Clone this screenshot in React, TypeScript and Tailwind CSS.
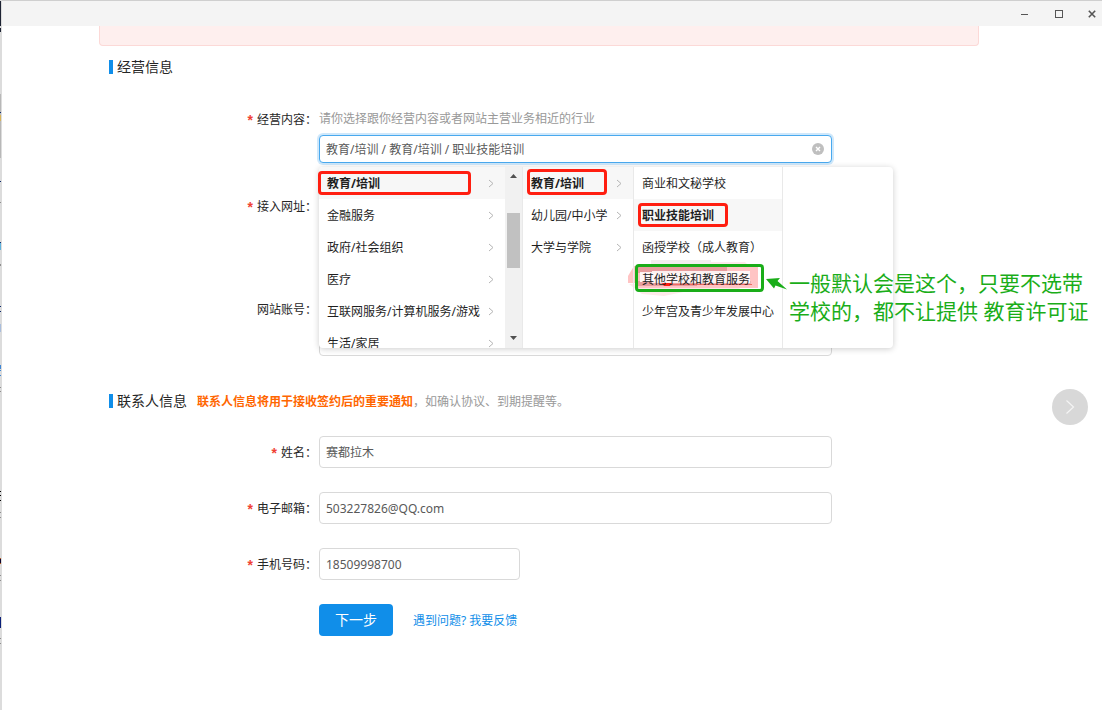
import { useState } from "react";
import clsx from "clsx";

type Option = { label: string; active?: boolean; leaf?: boolean };

const INDUSTRIES: Option[] = [
  { label: "教育/培训", active: true },
  { label: "金融服务" },
  { label: "政府/社会组织" },
  { label: "医疗" },
  { label: "互联网服务/计算机服务/游戏" },
  { label: "生活/家居" },
];

const SUB_INDUSTRIES: Option[] = [
  { label: "教育/培训", active: true },
  { label: "幼儿园/中小学" },
  { label: "大学与学院" },
];

const SCHOOLS: Option[] = [
  { label: "商业和文秘学校", leaf: true },
  { label: "职业技能培训", active: true, leaf: true },
  { label: "函授学校（成人教育）", leaf: true },
  { label: "其他学校和教育服务", leaf: true },
  { label: "少年宫及青少年发展中心", leaf: true },
];

const INPUT =
  "block w-full rounded border border-[#d9d9d9] bg-white px-1.5 text-xs text-[#595959] outline-none";

export default function App() {
  return (
    <div className="relative flex min-h-screen overflow-hidden bg-white font-['Noto_Sans','Noto_Sans_CJK_SC',sans-serif] text-xs text-[#262626]">
      <WindowEdge />
      <div className="min-w-0 flex-1">
        <TitleBar />
        <main className="pr-[26px]">
          <div className="mx-auto w-full max-w-[880px]">
            <div className="h-5 rounded-b border border-t-0 border-[#fcd9d7] bg-[#feefee]" />
            <form className="pl-2.5" onSubmit={(e) => e.preventDefault()}>
              <BusinessSection />
              <ContactSection />
              <div className="mt-6 flex items-center pl-[210px]">
                <button type="submit" className="h-8 w-[74px] rounded bg-[#108ee9] text-sm text-white">
                  下一步
                </button>
                <a href="#feedback" className="ml-5 pt-0.5 text-[#108ee9]">
                  遇到问题? 我要反馈
                </a>
              </div>
            </form>
          </div>
        </main>
      </div>
      <button
        type="button"
        aria-label="next"
        className="absolute top-[389px] right-3.5 flex size-9 items-center justify-center rounded-full bg-[#d8d8d8]"
      >
        <svg viewBox="0 0 10 16" className="h-4 w-2.5" fill="none" stroke="#f4f4f4" strokeWidth="1.2">
          <path d="M1.5 1.5 8.5 8l-7 6.5" />
        </svg>
      </button>
    </div>
  );
}

// sliver of the window behind, visible along the left side
function WindowEdge() {
  return (
    <svg className="w-0.5 shrink-0 self-stretch" viewBox="0 0 2 710" preserveAspectRatio="none" shapeRendering="crispEdges">
      <path fill="#dcdcdc" d="M0 0h2v710H0z" />
      <path fill="#1d2333" d="M0 1h1v25H0zM0 28h1v4H0z" />
      <path fill="#b8b8b8" d="M0 94h1v64H0z" />
      <path fill="#d8b45a" d="M0 115h1v6H0z" />
      <path fill="#0c2a6b" d="M0 112h1v1H0zM0 181h1v1H0zM0 242h1v1H0zM0 306h1v1H0zM0 311h1v1H0z" />
      <path fill="#62b3dd" d="M0 243h1v7H0z" />
      <path fill="#a9bddc" d="M0 324h1v8H0z" />
      <path fill="#3d86d6" d="M0 365h1v4H0zM0 370h1v1H0zM0 375h1v1H0z" />
      <path fill="#8f8f8f" d="M0 202h1v1H0zM0 264h1v2H0zM0 387h1v1H0zM0 391h1v1H0zM0 512h1v1H0zM0 517h1v1H0zM0 575h1v1H0zM0 580h1v1H0zM0 638h1v1H0zM0 643h1v1H0z" />
      <path fill="#000" d="M0 491h1v1H0zM0 495h1v1H0zM0 500h1v1H0z" />
      <path fill="#b4571c" d="M0 558h1v6H0z" />
      <path fill="#0d0630" d="M0 559h1v4H0z" />
      <path fill="#0a1f78" d="M0 617h1v11H0z" />
    </svg>
  );
}

function TitleBar() {
  return (
    <header className="flex h-[26px] items-center justify-end gap-3 border-t border-[#cfcfcf] bg-[#f4f4f4]">
      <button type="button" aria-label="minimize" className="flex w-[22px] justify-center">
        <svg viewBox="0 0 8 8" className="size-2" stroke="#555" shapeRendering="crispEdges">
          <path d="M0 4.5h7" />
        </svg>
      </button>
      <button type="button" aria-label="maximize" className="flex w-[22px] justify-center">
        <svg viewBox="0 0 8 8" className="size-2" fill="none" stroke="#555" shapeRendering="crispEdges">
          <path d="M.5.5h7v7h-7z" />
        </svg>
      </button>
      <button type="button" aria-label="close" className="flex w-5 justify-center">
        <svg viewBox="0 0 8 8" className="size-2" stroke="#555" strokeWidth="1.6">
          <path d="M.8.8l6.4 6.4M7.2.8.8 7.2" />
        </svg>
      </button>
    </header>
  );
}

function BusinessSection() {
  const [path, setPath] = useState("教育/培训 / 教育/培训 / 职业技能培训");

  return (
    <section className="pt-[11px]">
      <SectionTitle>经营信息</SectionTitle>
      <div className="mt-8 flex">
        <Label htmlFor="industry" required className="h-5">
          经营内容
        </Label>
        <div className="w-[513px]">
          <p className="h-5 leading-5 text-[#999]">请你选择跟你经营内容或者网站主营业务相近的行业</p>
          <div className="relative mt-1.5">
            <input
              id="industry"
              readOnly
              value={path}
              className="block h-7 w-full rounded border border-[#49a9ee] bg-white px-1.5 text-xs text-[#595959] ring-2 ring-[#108ee9]/20 outline-none"
            />
            <button
              type="button"
              aria-label="clear"
              className="absolute top-2 right-2"
              onClick={() => setPath("")}
            >
              <svg viewBox="0 0 12 12" className="size-3">
                <circle cx="6" cy="6" r="6" fill="#bfbfbf" />
                <path d="m4 4 4 4M8 4 4 8" stroke="#fff" strokeWidth="1.4" />
              </svg>
            </button>
            <Cascader />
          </div>
        </div>
      </div>
      <div className="mt-[27px] flex">
        <Label htmlFor="site" required className="h-8">
          接入网址
        </Label>
        <div className="w-[513px]">
          <input id="site" className={clsx(INPUT, "h-8")} />
        </div>
      </div>
      <div className="mt-[71px] flex">
        <Label htmlFor="account" className="h-8">
          网站账号
        </Label>
        <div className="w-[513px]">
          <textarea id="account" className={clsx(INPUT, "h-[63px] resize-none")} />
        </div>
      </div>
    </section>
  );
}

function ContactSection() {
  return (
    <section className="pt-[35px]">
      <SectionTitle>
        联系人信息
        <span className="ml-2.5 pt-0.5 text-xs text-[#999]">
          <b className="text-[#ff6600]">联系人信息将用于接收签约后的重要通知</b>，如确认协议、到期提醒等。
        </span>
      </SectionTitle>
      <div className="mt-[25px] space-y-6">
        <div className="flex">
          <Label htmlFor="name" required className="h-8">
            姓名
          </Label>
          <div className="w-[513px]">
            <input id="name" defaultValue="赛都拉木" className={clsx(INPUT, "h-8")} />
          </div>
        </div>
        <div className="flex">
          <Label htmlFor="email" required className="h-8">
            电子邮箱
          </Label>
          <div className="w-[513px]">
            <input id="email" defaultValue="503227826@QQ.com" className={clsx(INPUT, "h-8")} />
          </div>
        </div>
        <div className="flex">
          <Label htmlFor="phone" required className="h-8">
            手机号码
          </Label>
          <div className="w-[201px]">
            <input id="phone" defaultValue="18509998700" className={clsx(INPUT, "h-8")} />
          </div>
        </div>
      </div>
    </section>
  );
}

function SectionTitle({ children }: { children: React.ReactNode }) {
  return (
    <h2 className="flex h-5 items-center text-sm">
      <span className="mr-1 h-3.5 w-1 bg-[#108ee9]" />
      {children}
    </h2>
  );
}

function Label({
  htmlFor,
  required,
  className,
  children,
}: {
  htmlFor: string;
  required?: boolean;
  className?: string;
  children: React.ReactNode;
}) {
  return (
    <label htmlFor={htmlFor} className={clsx("flex w-[210px] shrink-0 items-center justify-end pt-0.5 pr-0.5", className)}>
      {required && <span className="mr-1 font-['Liberation_Sans'] text-sm font-bold text-[#f04134]">*</span>}
      {children}：
    </label>
  );
}

function Cascader() {
  return (
    <div className="absolute top-8 left-0 h-[181px] w-[574px] rounded bg-white shadow-[0_1px_6px_rgba(0,0,0,0.2)]">
      <Scribble />
      <div className="relative flex h-full overflow-hidden rounded">
        <div className="flex w-[204px] border-r border-[#e9e9e9]">
          <Menu options={INDUSTRIES} />
          <ScrollBar />
        </div>
        <div className="flex w-[111px] border-r border-[#e9e9e9]">
          <Menu options={SUB_INDUSTRIES} />
        </div>
        <div className="flex w-[149px] border-r border-[#e9e9e9]">
          <Menu options={SCHOOLS} />
        </div>
      </div>
      <div className="absolute top-1 -left-px h-6 w-[153px] rounded-sm border-3 border-[#ff1e10]" />
      <div className="absolute top-0.5 left-[208px] h-[26px] w-20 rounded-sm border-3 border-[#ff1e10]" />
      <div className="absolute top-9 left-[319px] h-6 w-[90px] rounded-sm border-3 border-[#ff1e10]" />
      <div className="absolute top-[97px] left-[316px] h-7 w-[129px] rounded-sm border-3 border-[#1aad19]" />
      <svg viewBox="0 0 22 14" className="absolute top-[110px] left-[447px] h-3.5 w-[22px]">
        <path fill="#1aad19" d="M0 2 14 1 11.5 4 21 12.5 9.5 8.5 8 11.5z" />
      </svg>
      <p className="absolute top-[102px] left-[470px] text-[21px] leading-7 whitespace-nowrap text-[#1aad19]">
        一般默认会是这个，只要不选带
        <br />
        学校的，都不让提供 教育许可证
      </p>
    </div>
  );
}

function Menu({ options }: { options: Option[] }) {
  return (
    <ul className="min-w-0 flex-1">
      {options.map((o) => (
        <li
          key={o.label}
          className={clsx(
            "flex h-8 items-center justify-between pt-0.5 pr-[11px] pl-2 whitespace-nowrap text-[#1f1f1f]",
            o.active && "bg-[#f7f7f7] font-bold",
          )}
        >
          {o.label}
          {!o.leaf && (
            <svg viewBox="0 0 6 10" className="h-2.5 w-1.5 shrink-0" fill="none" stroke="#b5b5b5">
              <path d="m1 1 4 3.5L1 8" />
            </svg>
          )}
        </li>
      ))}
    </ul>
  );
}

function ScrollBar() {
  return (
    <svg viewBox="0 0 17 181" className="h-full w-[17px] shrink-0">
      <path fill="#f1f1f1" d="M0 0h17v181H0z" />
      <path fill="#505050" d="m5 11 3.5-4 3.5 4zM5 169h7l-3.5 4z" />
      <path fill="#c1c1c1" d="M2 46h13v55H2z" />
    </svg>
  );
}

// marker strokes under the fourth school entry
function Scribble() {
  return (
    <svg viewBox="0 0 140 44" className="absolute top-[89px] left-[307px] h-11 w-[140px]">
      <path fill="#fdeaea" d="M3 28 25 26h95l-8 8-50 1-24 5-22-2z" />
      <path fill="#f3eeee" d="M25 4h60v6H25z" />
      <path fill="#fdeaea" d="M85 6h34l6 6H85z" />
      <path fill="#ffc4c4" d="M2 27V20L8 10h124v22H12l-2-5z" />
      <path fill="#e79d9d" d="M11 11h90v6H11zM11 25h60v5H11z" />
      <path fill="#e9b4b4" d="M71 25h54v4H71z" />
      <path fill="#fff" d="M14 16h12v10H14zM26 15h98v12H26z" opacity=".85" />
      <path fill="#ff1e10" d="M36 27h10l-2 3h-6z" />
      <path stroke="#f06a62" d="M46 28.5h80" />
    </svg>
  );
}
